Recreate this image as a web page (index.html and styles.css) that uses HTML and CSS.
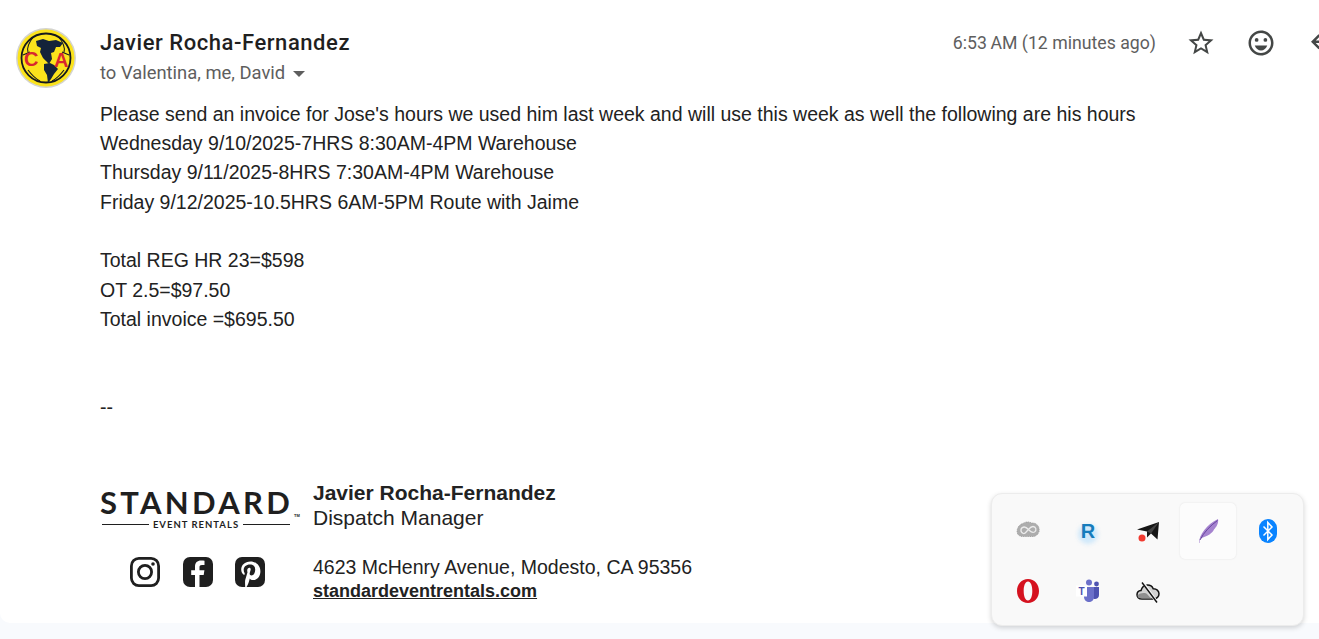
FILE: index.html
```html
<!DOCTYPE html>
<html lang="en">
  <head>
    <meta charset="UTF-8" />
    <meta name="viewport" content="width=device-width, initial-scale=1.0" />
    <title>Invoice for Jose's hours</title>
    <link rel="stylesheet" href="styles.css">
  </head>
  <body>
    <main class="message">
      <header class="message-head">
        <svg class="avatar" viewBox="0 0 60 60">
          <circle cx="30" cy="30" r="30" fill="#d4d4d0" />
          <circle cx="30" cy="30" r="28.5" fill="#fbe31c" />
          <circle cx="30" cy="30" r="24.5" fill="none" stroke="#14181f" stroke-width="1.8" />
          <path d="M18 8 Q10 18 12 24 M42 8 Q50 18 48 24 M12 42 Q18 50 24 53 M48 42 Q42 50 36 53 M7 27 L14 24 M53 27 L46 24" fill="none" stroke="#14181f" stroke-width="1.1" />
          <path d="M20 13 L27 11 L33 13 L40 12 L47 15 L44 19 L40 19 L38 24 L35 25 L36 31 L33 36 L30 33 L27 30 L24 24 L25 20 L21 18 Z" fill="#14233a" />
          <path d="M28 36 L34 35 L38 37 L42 41 L38 46 L35 51 L32 55 L31 47 L28 42 Z" fill="#14233a" />
          <text class="badge-letter" x="8" y="38">C</text>
          <text class="badge-letter" x="38" y="39">A</text>
        </svg>
        <div class="sender">
          <div class="sender-name">Javier Rocha-Fernandez</div>
          <div class="recipients">to Valentina, me, David <span class="caret"></span></div>
        </div>
        <div class="message-meta">
          <span class="timestamp">6:53&#8201;AM (12 minutes ago)</span>
          <svg class="action star" viewBox="0 0 24 24">
            <path d="M22 9.24l-7.19-.62L12 2 9.19 8.63 2 9.24l5.46 4.73L5.82 21 12 17.27 18.18 21l-1.63-7.03L22 9.24zM12 15.4l-3.76 2.27 1-4.28-3.32-2.88 4.38-.38L12 6.1l1.71 4.04 4.38.38-3.32 2.88 1 4.28L12 15.4z" />
          </svg>
          <svg class="action smile" viewBox="0 0 24 24">
            <circle cx="15.5" cy="9.5" r="1.5" />
            <circle cx="8.5" cy="9.5" r="1.5" />
            <path d="M12 18c2.28 0 4.22-1.66 5-4H7c.78 2.34 2.72 4 5 4z" />
            <path d="M12 2C6.47 2 2 6.47 2 12s4.47 10 10 10 10-4.47 10-10S17.53 2 12 2zm0 18c-4.42 0-8-3.58-8-8s3.58-8 8-8 8 3.58 8 8-3.58 8-8 8z" />
          </svg>
          <svg class="action reply" viewBox="0 0 24 24">
            <path d="M20 19v-4c0-1.700-1.300-3-3-3H7.800l3.600 3.600L10 17l-6-6 6-6 1.400 1.400L7.800 10H17c2.800 0 5 2.200 5 5v4z" />
          </svg>
        </div>
      </header>

      <section class="message-body">
        <p>Please send an invoice for Jose's hours we used him last week and will use this week as well the following are his hours</p>
        <p>Wednesday 9/10/2025-7HRS 8:30AM-4PM Warehouse</p>
        <p>Thursday 9/11/2025-8HRS 7:30AM-4PM Warehouse</p>
        <p>Friday 9/12/2025-10.5HRS 6AM-5PM Route with Jaime</p>
        <p class="blank"></p>
        <p>Total REG HR 23=$598</p>
        <p>OT 2.5=$97.50</p>
        <p>Total invoice =$695.50</p>
        <p class="blank"></p>
        <p class="blank"></p>
        <p>--</p>
      </section>

      <section class="signature">
        <div class="logo">
          <div class="logo-word">STANDARD</div>
          <div class="logo-sub"><span>EVENT RENTALS</span></div>
          <span class="logo-tm">TM</span>
        </div>
        <div class="sig-name">
          <strong>Javier Rocha-Fernandez</strong>
          <div>Dispatch Manager</div>
        </div>
        <div class="socials">
          <svg viewBox="0 0 30 30">
            <rect x="1.400" y="1.400" width="27.200" height="27.200" rx="7.500" fill="none" stroke="#1f1f1f" stroke-width="2.800" />
            <circle cx="15" cy="15" r="6.600" fill="none" stroke="#1f1f1f" stroke-width="2.800" />
            <circle cx="23" cy="7" r="1.800" fill="#1f1f1f" />
          </svg>
          <svg viewBox="0 0 30 30">
            <rect width="30" height="30" rx="7" fill="#1f1f1f" />
            <path d="M16.500 30V18h4.200l.7-4.800h-4.900v-3c0-1.400.6-2.300 2.500-2.300h2.500V3.700c-.8-.1-2-.3-3.500-.3-3.700 0-6 2.200-6 6.300v3.500H8.200V18h3.800v12z" fill="#fff" />
          </svg>
          <svg viewBox="0 0 30 30">
            <rect width="30" height="30" rx="7" fill="#1f1f1f" />
            <path d="M15.500 4.500c-5.800 0-9.300 3.800-9.300 8 0 2.300 1.100 4.700 2.900 5.400.6.200.8-1.500.5-2-.5-.7-.9-1.600-.9-2.900 0-3 2.500-5.400 6.200-5.400 3.300 0 5.300 2 5.300 4.800 0 3.200-1.500 6-3.700 6-1.200 0-2.100-1-1.800-2.200.4-1.400 1-2.900 1-3.900 0-2.300-3.500-2-3.500 1.200 0 1 .3 1.700.3 1.700L10.200 23c-.3 1.500-.1 4.500 0 7h1.300c.8-1.300 2-3.700 2.400-5.300l.9-3.300c.5.900 1.800 1.700 3.300 1.700 4.300 0 7.300-3.900 7.300-8.800 0-5.700-4.400-9.800-9.900-9.800z" fill="#fff" />
          </svg>
        </div>
        <div class="sig-address">
          <div>4623 McHenry Avenue, Modesto, CA 95356</div>
          <a class="sig-link" href="#">standardeventrentals.com</a>
        </div>
      </section>
    </main>

    <aside class="tray">
      <div class="tray-item">
        <svg viewBox="0 0 24 24">
          <path d="M7 4.500c2-1.800 6-2.200 8.500-.5 3.500-.3 6.500 1.500 7.300 4.500 1.400 4-1 8.500-5.300 9H6.500C2.500 17.500.500 14.500 1.200 11 1.700 8 4 5 7 4.500z" fill="#adadad" stroke="#8f8f8f" stroke-width=".7" stroke-dasharray="1 .8" />
          <path d="M7.500 14.500c-3.500-1-3.500-6 .5-6.500 2.500-.2 4 2 5.500 3.500s3 2.500 5 1.500c2.500-1.500 1.500-5.500-1.500-5.500-2.500 0-4 2.500-5.500 4s-2.500 3.500-4 3z" fill="none" stroke="#ececec" stroke-width="1.300" />
        </svg>
      </div>
      <div class="tray-item">
        <span class="r-glow"></span>
        <span class="r-letter">R</span>
      </div>
      <div class="tray-item">
        <svg viewBox="0 0 24 24">
          <path d="M1 10.500L23 3 21.500 20.500 15 14.500 11 18.500 11 12.500z" fill="#161616" />
          <path d="M11 12.500L23 3 15 14.500z" fill="#fff" opacity=".2" />
          <circle cx="6" cy="19" r="3.500" fill="#f13a30" />
        </svg>
      </div>
      <div class="tray-item active">
        <svg viewBox="0 0 24 24">
          <path d="M3 24C3 16 11 5 22 0c.8 4-1.500 8-4 10.500-1 2-2.500 3.500-4.500 5-3 2-6.500 2.500-9.500 4.500L3.500 24z" fill="#a583cf" />
          <path d="M4 21C8 13 14 7 21.500 1.500" fill="none" stroke="#5f3d97" stroke-width=".9" />
        </svg>
      </div>
      <div class="tray-item">
        <svg viewBox="0 0 24 24">
          <rect x="3" y="0" width="18" height="24" rx="9" fill="#0a84ff" />
          <path d="M7.500 7.500L16 16l-4.200 4.500V3.500L16 8l-8.500 8.500" fill="none" stroke="#fff" stroke-width="1.500" />
        </svg>
      </div>
      <div class="tray-item">
        <svg viewBox="0 0 24 24">
          <path fill-rule="evenodd" d="M12 0C5.500 0 1 5.400 1 12s4.500 12 11 12 11-5.400 11-12S18.500 0 12 0zm0 2.500c2.800 0 4.300 4.300 4.300 9.500s-1.500 9.500-4.300 9.500S7.700 17.200 7.700 12 9.200 2.500 12 2.500z" fill="#d5121f" />
        </svg>
      </div>
      <div class="tray-item">
        <svg viewBox="0 0 24 24">
          <circle cx="13" cy="3.500" r="3" fill="#6b70c9" />
          <circle cx="20.500" cy="5" r="2.400" fill="#4d52b0" />
          <path d="M17 8h6v8c0 2.500-2 4-4 4-1 0-1.500-.3-2-.7z" fill="#4d52b0" />
          <path d="M8 8h10v10c0 3-2.500 5-5 5s-5-2-5-5z" fill="#6b70c9" />
          <rect x="0" y="6.500" width="11" height="11" fill="#fff" />
          <text class="teams-t" x="5.500" y="15.500">T</text>
        </svg>
      </div>
      <div class="tray-item">
        <svg viewBox="0 0 24 24">
          <path d="M6 20c-3.500 0-5-2.300-5-4.300 0-2.500 2-4 4-4.200C6 8 8.500 6 11.500 6c2.600 0 4.800 1.400 5.700 3.700 3.300-.2 5.800 2.300 5.800 5 0 2.600-2 5.300-5 5.300z" fill="#d2d2d2" stroke="#111" stroke-width="1.500" />
          <path d="M1.500 16.500c3-3 8-3 10-1 1.500 1.500 3 3.500 5 4H6c-3 0-4.500-1-4.500-3z" fill="#8f8f8f" />
          <path d="M7 3.500l14 20" stroke="#f7f7f7" stroke-width="3" />
          <path d="M6 3.500l15 20" stroke="#111" stroke-width="1.400" />
        </svg>
      </div>
    </aside>
  </body>
</html>
```

FILE: styles.css
```css
html,
body {
  height: 100%;
}

body {
  margin: 0;
  background: #f8fafd;
  overflow: hidden;
  font-family: "Liberation Sans", Arial, sans-serif;
  color: #222;
}

.message {
  height: 623px;
  box-sizing: border-box;
  background: white;
  border-bottom-left-radius: 10px;
  padding-top: 28px;
  overflow: hidden;
}

.message-head {
  display: flex;
  height: 71.6px;
  padding-left: 16px;
}

.avatar {
  width: 60px;
  height: 60px;
  flex: none;
}

.badge-letter {
  font-family: "Liberation Sans", sans-serif;
  font-weight: 700;
  font-size: 20px;
  fill: #d8272f;
}

.sender {
  margin-left: 24px;
  padding-top: 1px;
  flex: none;
}

.sender-name {
  font-family: Roboto, sans-serif;
  font-size: 22px;
  font-weight: 500;
  line-height: 28px;
  letter-spacing: 0.55px;
  color: #1f1f1f;
}

.recipients {
  font-family: Roboto, sans-serif;
  font-size: 18.4px;
  line-height: 24px;
  margin-top: 4px;
  color: #5e5e5e;
}

.caret {
  display: inline-block;
  width: 0;
  height: 0;
  margin-left: 3px;
  vertical-align: 2px;
  border-left: 6px solid transparent;
  border-right: 6px solid transparent;
  border-top: 6px solid #5e5e5e;
}

.message-meta {
  margin-left: auto;
  display: flex;
  align-items: flex-start;
  flex: none;
  margin-right: -17px;
}

.timestamp {
  font-family: Roboto, sans-serif;
  font-size: 17.7px;
  line-height: 30px;
  color: #5e5e5e;
  margin-right: 30px;
}

.action {
  width: 30px;
  height: 30px;
  fill: #444746;
  flex: none;
}

.smile {
  margin-left: 30px;
}

.reply {
  margin-left: 30px;
}

.message-body {
  padding-left: 100px;
  font-size: 19.5px;
  line-height: 29.33px;
  color: #222;
}

.message-body p {
  margin: 0;
}

.blank {
  height: 29.33px;
}

.signature {
  display: grid;
  grid-template-columns: 213px 1fr;
  grid-template-rows: 60px 52px;
  margin-top: 57.4px;
  padding-left: 100px;
  row-gap: 15px;
}

.logo {
  position: relative;
  width: 192px;
  padding-top: 7px;
}

.logo-word {
  font-family: Lato, sans-serif;
  font-weight: 700;
  font-size: 31px;
  line-height: 30px;
  letter-spacing: 3.3px;
  color: #1f1f1f;
  white-space: nowrap;
}

.logo-sub {
  display: flex;
  align-items: center;
  gap: 4px;
  margin-top: 2px;
  padding: 0 2px;
  font-family: Lato, sans-serif;
  font-weight: 700;
  font-size: 9.5px;
  line-height: 12px;
  letter-spacing: 1px;
  color: #1f1f1f;
}

.logo-sub::before,
.logo-sub::after {
  content: "";
  flex: 1;
  height: 1px;
  background: #1f1f1f;
}

.logo-tm {
  position: absolute;
  left: 194px;
  top: 33px;
  font-size: 4px;
  font-weight: 700;
}

.sig-name {
  font-size: 21px;
  line-height: 25px;
  color: #222;
}

.socials {
  display: flex;
  gap: 22.5px;
  padding-left: 30px;
  padding-top: 2px;
  align-items: flex-start;
}

.socials svg {
  width: 30px;
  height: 30px;
}

.sig-address {
  font-size: 19.5px;
  line-height: 24.5px;
}

.sig-link {
  display: block;
  font-size: 18px;
  font-weight: 700;
  color: #222;
}

.tray {
  position: absolute;
  left: 991px;
  top: 493px;
  width: 313px;
  height: 133px;
  box-sizing: border-box;
  padding: 7px 6px;
  display: grid;
  grid-template-columns: repeat(5, 60px);
  grid-auto-rows: 60px;
  background: #f9f9f9;
  border: 1px solid #ececec;
  border-radius: 11px;
  box-shadow: 0 2px 5px rgba(0, 0, 0, 0.16);
}

.tray-item {
  position: relative;
  display: flex;
  align-items: center;
  justify-content: center;
  width: 56px;
  height: 56px;
  margin: 2px;
  border-radius: 5px;
}

.tray-item svg {
  width: 24px;
  height: 24px;
}

.tray-item.active {
  background: #fcfcfc;
  box-shadow: 0 0 2px rgba(0, 0, 0, 0.1);
}

.r-glow {
  position: absolute;
  left: 18px;
  top: 21px;
  width: 20px;
  height: 20px;
  border-radius: 50%;
  background: #cfe8fa;
  filter: blur(2px);
}

.r-letter {
  position: relative;
  font-family: "Liberation Sans", sans-serif;
  font-size: 20px;
  font-weight: 700;
  color: #167cbc;
}

.teams-t {
  font-family: "Liberation Sans", sans-serif;
  font-size: 10px;
  font-weight: 700;
  fill: #4d52b0;
  text-anchor: middle;
}
```
